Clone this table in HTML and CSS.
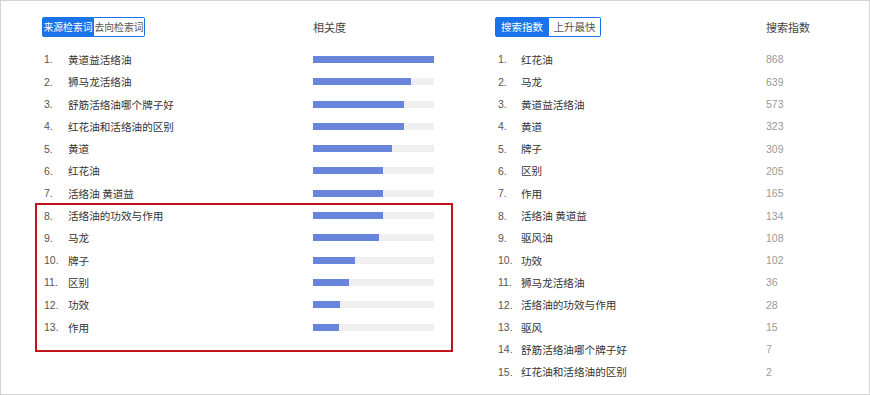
FILE: index.html
```html
<!DOCTYPE html>
<html lang="zh">
<head>
<meta charset="utf-8">
<title>检索词</title>
<link rel="stylesheet" href="styles.css">
</head>
<body>
<div class="frame">
  <section class="panel panel-left">
    <div class="tabs tabs-narrow">
      <span class="tab active">来源检索词</span><span class="tab">去向检索词</span>
    </div>
    <div class="colhead">相关度</div>

    <span class="num">1.</span><span class="name">黄道益活络油</span><span class="bar"><i class="fill" style="width:121px"></i></span>
    <span class="num">2.</span><span class="name">狮马龙活络油</span><span class="bar"><i class="fill" style="width:98px"></i></span>
    <span class="num">3.</span><span class="name">舒筋活络油哪个牌子好</span><span class="bar"><i class="fill" style="width:91px"></i></span>
    <span class="num">4.</span><span class="name">红花油和活络油的区别</span><span class="bar"><i class="fill" style="width:91px"></i></span>
    <span class="num">5.</span><span class="name">黄道</span><span class="bar"><i class="fill" style="width:79px"></i></span>
    <span class="num">6.</span><span class="name">红花油</span><span class="bar"><i class="fill" style="width:70px"></i></span>
    <span class="num">7.</span><span class="name">活络油 黄道益</span><span class="bar"><i class="fill" style="width:70px"></i></span>
    <span class="num">8.</span><span class="name">活络油的功效与作用</span><span class="bar"><i class="fill" style="width:70px"></i></span>
    <span class="num">9.</span><span class="name">马龙</span><span class="bar"><i class="fill" style="width:66px"></i></span>
    <span class="num">10.</span><span class="name">牌子</span><span class="bar"><i class="fill" style="width:42px"></i></span>
    <span class="num">11.</span><span class="name">区别</span><span class="bar"><i class="fill" style="width:36px"></i></span>
    <span class="num">12.</span><span class="name">功效</span><span class="bar"><i class="fill" style="width:27px"></i></span>
    <span class="num">13.</span><span class="name">作用</span><span class="bar"><i class="fill" style="width:26px"></i></span>
  </section>

  <section class="panel panel-right">
    <div class="tabs tabs-wide">
      <span class="tab active">搜索指数</span><span class="tab">上升最快</span>
    </div>
    <div class="colhead">搜索指数</div>

    <span class="num">1.</span><span class="name">红花油</span><span class="val">868</span>
    <span class="num">2.</span><span class="name">马龙</span><span class="val">639</span>
    <span class="num">3.</span><span class="name">黄道益活络油</span><span class="val">573</span>
    <span class="num">4.</span><span class="name">黄道</span><span class="val">323</span>
    <span class="num">5.</span><span class="name">牌子</span><span class="val">309</span>
    <span class="num">6.</span><span class="name">区别</span><span class="val">205</span>
    <span class="num">7.</span><span class="name">作用</span><span class="val">165</span>
    <span class="num">8.</span><span class="name">活络油 黄道益</span><span class="val">134</span>
    <span class="num">9.</span><span class="name">驱风油</span><span class="val">108</span>
    <span class="num">10.</span><span class="name">功效</span><span class="val">102</span>
    <span class="num">11.</span><span class="name">狮马龙活络油</span><span class="val">36</span>
    <span class="num">12.</span><span class="name">活络油的功效与作用</span><span class="val">28</span>
    <span class="num">13.</span><span class="name">驱风</span><span class="val">15</span>
    <span class="num">14.</span><span class="name">舒筋活络油哪个牌子好</span><span class="val">7</span>
    <span class="num">15.</span><span class="name">红花油和活络油的区别</span><span class="val">2</span>
  </section>

  <div class="highlight"></div>
</div>
</body>
</html>
```

FILE: styles.css
```css
html, body {
  margin: 0;
  padding: 0;
  background: #ffffff;
}

.frame {
  position: relative;
  box-sizing: border-box;
  width: 870px;
  height: 395px;
  border: 1px solid #d4d4d4;
  padding: 16px 0 0 41px;
  display: flex;
  gap: 61px;
  font-family: "Liberation Sans", "Noto Sans CJK SC", sans-serif;
  font-size: 10.5px;
  color: #333333;
}

.panel {
  display: grid;
  grid-template-rows: 31.35px;
  grid-auto-rows: 22.3px;
  align-items: center;
  align-content: start;
}

.panel-left {
  width: 392px;
  grid-template-columns: 26px 245px 121px;
}

.panel-right {
  width: 330px;
  grid-template-columns: 26px 245px 1fr;
}

.tabs {
  grid-column: 1 / 3;
  display: flex;
  height: 20px;
  align-self: start;
}

.tab {
  box-sizing: border-box;
  height: 20px;
  line-height: 18px;
  border: 1px solid #1a73e8;
  background: #ffffff;
  color: #555555;
  text-align: center;
  white-space: nowrap;
  font-family: "Noto Sans CJK SC", sans-serif;
}

.tab:first-child {
  border-radius: 2px 0 0 2px;
}

.tab:last-child {
  border-radius: 0 2px 2px 0;
}

.tab.active {
  background: #1a73e8;
  color: #ffffff;
}

.tabs-narrow .tab {
  width: 52px;
  font-size: 9.8px;
}

.tabs-narrow .tab + .tab {
  width: 51px;
  border-left: none;
}

.tabs-wide .tab {
  width: 54px;
  font-size: 10.5px;
}

.tabs-wide .tab + .tab {
  width: 52px;
  border-left: none;
}

.colhead {
  align-self: start;
  line-height: 20px;
  height: 20px;
  font-size: 11px;
  color: #444444;
  font-family: "Noto Sans CJK SC", sans-serif;
  white-space: nowrap;
}

.num {
  padding-left: 2px;
  color: #555555;
  font-size: 10.5px;
}

.panel-right .num {
  padding-left: 3px;
}

.name {
  font-family: "Noto Sans CJK SC", sans-serif;
  font-size: 10.6px;
  color: #333333;
  white-space: nowrap;
}

.bar {
  display: block;
  height: 7px;
  background: #efefef;
}

.fill {
  display: block;
  height: 7px;
  background: #6785da;
}

.val {
  color: #9a9a9a;
  font-size: 10.5px;
}

.highlight {
  position: absolute;
  left: 34px;
  top: 202px;
  width: 418px;
  height: 149px;
  box-sizing: border-box;
  border: 2px solid #c0141c;
}
```
